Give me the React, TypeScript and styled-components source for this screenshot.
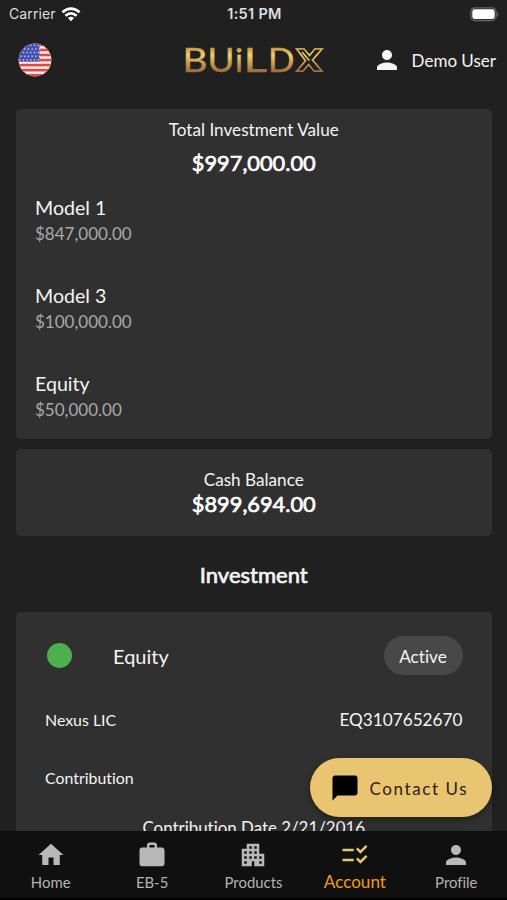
import React from 'react';
import styled, { createGlobalStyle } from 'styled-components';
import { MdApartment, MdChatBubble, MdChecklistRtl, MdHome, MdPerson, MdWork } from 'react-icons/md';

const GlobalStyle = createGlobalStyle`
  * { box-sizing: border-box; }
  body { margin: 0; background: #202020; }
`;

const Screen = styled.div`
  position: relative;
  display: flex;
  flex-direction: column;
  width: 507px;
  height: 900px;
  overflow: hidden;
  background: #202020;
  color: #f4f4f4;
  font-family: 'Lato', sans-serif;
  font-variant-ligatures: none;
`;

const StatusBar = styled.div`
  display: grid;
  grid-template-columns: 1fr auto 1fr;
  align-items: center;
  height: 28px;
  padding: 0 7px 0 9px;
  font-family: 'Inter', sans-serif;
  font-size: 14px;
  line-height: 28px;
  color: #dedede;
`;

const Carrier = styled.div`
  display: flex;
  align-items: center;
  gap: 5px;
  letter-spacing: 0.1px;
`;

const Clock = styled.div`
  font-size: 14.5px;
  font-weight: 600;
  letter-spacing: 0.3px;
`;

const BatterySlot = styled.div`
  display: flex;
  justify-content: flex-end;
`;

const Header = styled.header`
  display: grid;
  grid-template-columns: 162.5px 1fr auto;
  align-items: center;
  flex: none;
  height: 64px;
  padding: 0 11px 0 18px;
`;

const User = styled.div`
  display: flex;
  align-items: center;
  justify-content: flex-end;
  gap: 10px;
  font-size: 17px;
  line-height: 24px;
  white-space: nowrap;

  span { margin-top: 1px; }
`;

const Content = styled.main`
  flex: 1;
  min-height: 0;
  overflow: hidden;
  padding: 17px 15px 0 15.5px;
`;

const Card = styled.section<{ $height: number; $pad: string }>`
  height: ${(p) => p.$height}px;
  padding: ${(p) => p.$pad};
  border-radius: 5px;
  background: #303030;
`;

const BalanceCard = styled(Card)`
  margin-top: 10px;
`;

const Label = styled.div`
  font-size: 17.15px;
  line-height: 22px;
  text-align: center;
`;

const Amount = styled.div<{ $gap: number }>`
  margin-top: ${(p) => p.$gap}px;
  font-size: 21.8px;
  line-height: 28px;
  text-align: center;
  color: #fff;
  -webkit-text-stroke: 0.7px #fff;
`;

const Holdings = styled.div`
  display: flex;
  flex-direction: column;
  gap: 36px;
  margin-top: 18px;
  padding-left: 19.5px;
`;

const HoldingName = styled.div`
  font-size: 19.6px;
  line-height: 26px;
`;

const HoldingValue = styled.div`
  font-size: 17px;
  line-height: 26px;
  color: #a9a9a9;
`;

const SectionTitle = styled.h2`
  margin: 0;
  height: 76px;
  font-size: 22px;
  font-weight: 400;
  line-height: 78px;
  text-align: center;
  -webkit-text-stroke: 0.7px #f4f4f4;
`;

const InvestmentHead = styled.div`
  display: flex;
  align-items: center;
  height: 39px;
  font-size: 20px;
`;

const StatusDot = styled.span`
  width: 25px;
  height: 25px;
  margin: 0 41px 0 2px;
  border-radius: 50%;
  background: #4caf50;
`;

const Chip = styled.span`
  margin-left: auto;
  width: 79px;
  border-radius: 20px;
  background: #484848;
  font-size: 17.2px;
  line-height: 41px;
  height: 39px;
  text-align: center;
`;

const DetailRow = styled.div<{ $gap: number }>`
  display: flex;
  align-items: center;
  justify-content: space-between;
  margin-top: ${(p) => p.$gap}px;
  font-size: 15.9px;
  line-height: 24px;
`;

const DetailValue = styled.span`
  font-size: 17.2px;
`;

const ContributionDate = styled.div`
  margin-top: 26px;
  font-size: 16.9px;
  line-height: 24px;
  text-align: center;
`;

const ContactButton = styled.button`
  position: absolute;
  right: 15px;
  bottom: 83px;
  display: flex;
  align-items: center;
  gap: 10px;
  width: 182px;
  height: 59px;
  padding: 0 0 0 19.5px;
  border: 0;
  border-radius: 30px;
  background: #eac571;
  box-shadow: 0 3px 6px rgba(0, 0, 0, 0.35);
  color: #2b2110;
  font-family: inherit;
  font-size: 17px;
  letter-spacing: 1.6px;
  white-space: nowrap;

  svg { color: #000; flex: none; }
  span { margin-top: 2px; }
`;

const Nav = styled.nav`
  display: grid;
  grid-template-columns: repeat(5, 1fr);
  flex: none;
  height: 69px;
  background: #101010;
  border-bottom: 2px solid #000;
`;

const NavItem = styled.a<{ $active?: boolean }>`
  display: flex;
  flex-direction: column;
  align-items: center;
  padding-top: 9px;
  color: ${(p) => (p.$active ? '#f39c12' : '#b3b3b3')};
  font-size: ${(p) => (p.$active ? 17.1 : 14.9)}px;
  line-height: 24px;

  svg { color: ${(p) => (p.$active ? '#eac571' : '#b8b8b8')}; }
`;

const WifiIcon = () => (
  <svg width="20" height="15" viewBox="0 0 20 15" fill="none" stroke="#fff" strokeWidth="2.7">
    <path d="M1.4 5.2Q10-2 18.6 5.2" />
    <path d="M4.4 8.7Q10 4 15.6 8.7" />
    <path d="M6.9 11Q10 8.4 13.1 11L10 14.2Z" fill="#fff" stroke="none" />
  </svg>
);

const BatteryIcon = () => (
  <svg width="31" height="15" viewBox="0 0 31 15">
    <rect x="1.9" y="0.9" width="25.2" height="12.6" rx="4" fill="none" stroke="#666" strokeWidth="1.3" />
    <rect x="3.3" y="2.3" width="22.4" height="9.8" rx="2.4" fill="#fff" />
    <path d="M28.5 4.9Q30.6 7.2 28.5 9.5Z" fill="#777" />
  </svg>
);

const stars = Array.from({ length: 5 }, (_, row) =>
  Array.from({ length: 6 }, (_, col) => ({ x: 1.8 + col * 3.7 + (row % 2) * 1.2, y: 2.2 + row * 3.7 })),
).flat();

const FlagIcon = () => (
  <svg width="34" height="34" viewBox="0 0 34 34">
    <defs>
      <clipPath id="flag-disc"><circle cx="17" cy="17" r="16.4" /></clipPath>
    </defs>
    <g clipPath="url(#flag-disc)">
      <rect width="34" height="34" fill="#f7eeee" />
      {Array.from({ length: 7 }, (_, i) => (
        <rect key={i} y={0.6 + i * 5.05} width="34" height="2.6" fill="#df4a43" />
      ))}
      <rect width="21.5" height="18.6" fill="#4653b5" />
      {stars.map((s, i) => (
        <circle key={i} cx={s.x} cy={s.y} r="0.75" fill="#dfe2f5" />
      ))}
    </g>
  </svg>
);

const Logo = () => (
  <svg width="144" height="52" viewBox="-4 -10 144 52">
    <defs>
      <linearGradient id="gold" gradientUnits="userSpaceOnUse" x1="0" y1="4" x2="0" y2="28">
        <stop offset="0" stopColor="#c79b3f" />
        <stop offset="0.3" stopColor="#f0cf72" />
        <stop offset="0.6" stopColor="#cfa04f" />
        <stop offset="1" stopColor="#9b6b3c" />
      </linearGradient>
    </defs>
    <g fill="url(#gold)" stroke="url(#gold)" strokeWidth="0.4" fontFamily="Lato" fontSize="33.5">
      <text x="-2.5" y="28" textLength="25" lengthAdjust="spacingAndGlyphs">B</text>
      <text x="22.5" y="28" textLength="27" lengthAdjust="spacingAndGlyphs">U</text>
      <text x="50" y="28">i</text>
      <text x="58.5" y="28" textLength="23.5" lengthAdjust="spacingAndGlyphs">L</text>
      <text x="83" y="28" textLength="26.5" lengthAdjust="spacingAndGlyphs">D</text>
    </g>
    <path
      d="M111.5 4.8H119L124.5 11.5L130 4.8H137.2L127.5 16L137 27.2H129.2L123.6 20.5L118 27.2H111.7L120.5 16.8ZM117 8L124.5 16.8"
      fill="none"
      stroke="url(#gold)"
      strokeWidth="1.7"
    />
  </svg>
);

const holdings = [
  { name: 'Model 1', value: '$847,000.00' },
  { name: 'Model 3', value: '$100,000.00' },
  { name: 'Equity', value: '$50,000.00' },
];

const tabs = [
  { label: 'Home', Icon: MdHome },
  { label: 'EB-5', Icon: MdWork },
  { label: 'Products', Icon: MdApartment },
  { label: 'Account', Icon: MdChecklistRtl, active: true },
  { label: 'Profile', Icon: MdPerson },
];

export default function App() {
  return (
    <Screen>
      <GlobalStyle />
      <StatusBar>
        <Carrier>Carrier<WifiIcon /></Carrier>
        <Clock>1:51 PM</Clock>
        <BatterySlot><BatteryIcon /></BatterySlot>
      </StatusBar>
      <Header>
        <FlagIcon />
        <Logo />
        <User><MdPerson size={30} /><span>Demo User</span></User>
      </Header>
      <Content>
        <Card $height={330} $pad="10px 0 0">
          <Label>Total Investment Value</Label>
          <Amount $gap={8}>$997,000.00</Amount>
          <Holdings>
            {holdings.map((h) => (
              <div key={h.name}>
                <HoldingName>{h.name}</HoldingName>
                <HoldingValue>{h.value}</HoldingValue>
              </div>
            ))}
          </Holdings>
        </Card>
        <BalanceCard $height={87} $pad="20px 0 0">
          <Label>Cash Balance</Label>
          <Amount $gap={-1}>$899,694.00</Amount>
        </BalanceCard>
        <SectionTitle>Investment</SectionTitle>
        <Card $height={300} $pad="24px 29.5px 0">
          <InvestmentHead>
            <StatusDot />
            Equity
            <Chip>Active</Chip>
          </InvestmentHead>
          <DetailRow $gap={33}>
            <span>Nexus LIC</span>
            <DetailValue>EQ3107652670</DetailValue>
          </DetailRow>
          <DetailRow $gap={34}>
            <span>Contribution</span>
          </DetailRow>
          <ContributionDate>Contribution Date 2/21/2016</ContributionDate>
        </Card>
      </Content>
      <Nav>
        {tabs.map(({ label, Icon, active }) => (
          <NavItem key={label} $active={active}>
            <Icon size={30} />
            <span>{label}</span>
          </NavItem>
        ))}
      </Nav>
      <ContactButton>
        <MdChatBubble size={30} />
        <span>Contact Us</span>
      </ContactButton>
    </Screen>
  );
}
